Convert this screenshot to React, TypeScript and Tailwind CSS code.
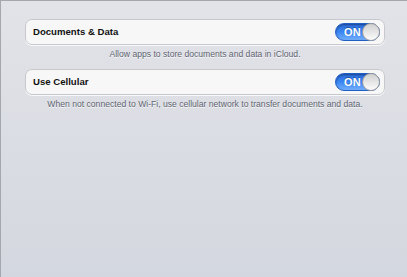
import React from "react";

const Toggle: React.FC = () => (
  <div className="relative flex h-[18px] w-[45px] items-center rounded-full border border-[#1f5fc4] bg-gradient-to-b from-[#2a68d8] via-[#3a86f4] to-[#72aefb] shadow-[inset_0_1px_2px_rgba(0,0,0,0.35)]">
    <span className="pl-[8px] text-[11px] font-bold leading-none tracking-[0.3px] text-white [text-shadow:0_-1px_0_rgba(0,0,0,0.3)]">
      ON
    </span>
    <span className="absolute right-[-1px] top-[-1px] h-[18px] w-[18px] rounded-full border border-[#9d9d9d] bg-gradient-to-b from-[#d0d0d0] to-[#fcfcfc]" />
  </div>
);

const Row: React.FC<{ label: string; caption: string }> = ({ label, caption }) => (
  <div className="flex flex-col">
    <div className="flex h-[26px] items-center justify-between rounded-[7px] border border-[#c7c8cc] bg-[#f7f7f7] pl-[7px] pr-[4px] shadow-[0_1px_0_rgba(255,255,255,0.8)]">
      <span className="text-[9.6px] font-bold text-[#111]">{label}</span>
      <Toggle />
    </div>
    <div className="mt-[3px] text-center text-[8.6px] leading-[12px] text-[#5e6370] [text-shadow:0_1px_0_rgba(255,255,255,0.8)]">
      {caption}
    </div>
  </div>
);

export default function App() {
  return (
    <div
      className="h-[277px] w-[407px] overflow-hidden border-l border-t border-[#a4a7ae] bg-gradient-to-b from-[#e2e3e8] to-[#d3d7df]"
      style={{ fontFamily: '"Liberation Sans", Arial, sans-serif' }}
    >
      <div className="flex flex-col gap-[9px] pl-[24px] pr-[22px] pt-[18px]">
        <Row label="Documents & Data" caption="Allow apps to store documents and data in iCloud." />
        <Row
          label="Use Cellular"
          caption="When not connected to Wi-Fi, use cellular network to transfer documents and data."
        />
      </div>
    </div>
  );
}
